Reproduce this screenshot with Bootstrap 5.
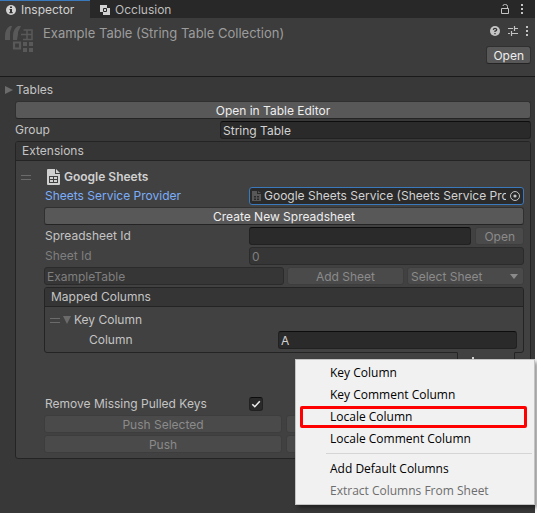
<!DOCTYPE html>
<html lang="en">
<head>
<meta charset="utf-8">
<meta name="viewport" content="width=device-width, initial-scale=1">
<title>Inspector</title>
<link href="https://cdn.jsdelivr.net/npm/bootstrap@5.3.0/dist/css/bootstrap.min.css" rel="stylesheet">
<style>
body{background:#fff;font-family:Inter,"Liberation Sans",sans-serif;font-size:12px;line-height:16px;color:#c4c4c4}
svg{display:block;flex:none}
.editor{background:#383838;min-height:100vh;margin-right:2px}
.tabs{background:#282828;height:18px}
.tab-item{height:18px;padding:1px 6px 0;gap:5px;color:#bdbdbd;font-size:12px;line-height:16px;border:0;background:none}
.tab-item.on{background:#3c3c3c;border-top:1px solid #3a79bb;width:90px;padding-top:0;color:#d2d2d2}
.tab-tools{gap:12px}
.asset-head{background:#3c3c3c;height:59px;border-bottom:1px solid #1a1a1a;padding:6px 4px 0 4px}
.asset-name{color:#9c9c9c;margin-left:9px;font-size:13px;line-height:18px}
.asset-tools{gap:8px;padding-right:3px}
.ibtn{border:0;background:none;padding:0;color:#c4c4c4}
.ebtn{height:18px;border:1px solid #303030;border-bottom-color:#242424;border-radius:3px;background:#585858;color:#eee;padding:0 6px;line-height:15px;font-size:12px;text-align:center}
.ebtn:disabled{background:#4a4a4a;border-color:#3d3d3d;color:#8b8b8b}
.field{height:18px;border:1px solid #212121;border-top-color:#0d0d0d;border-radius:3px;background:#2a2a2a;color:#d2d2d2;padding:0 2px;line-height:16px;font-size:12px;min-width:0;outline:0}
.field:disabled{background:#363636;border-color:#2b2b2b;color:#7f7f7f}
.line{height:18px;margin-bottom:2px}
.foldout{color:#c4c4c4;gap:3px;height:18px;margin-bottom:2px;padding:0 0 0 5px;border:0;background:none}
.group-body{padding:0 4px 0 15px}
.panel{border:1px solid #242424;border-radius:3px;background:#414141}
.panel-title{background:#353535;border-bottom:1px solid #242424;height:19px;padding:0 6px;line-height:18px;border-radius:2px 2px 0 0}
.ext-body{padding:6px 6px 5px 5px}
.sheet-head{height:20px;gap:4px;color:#d0d0d0}
.grip{width:10px;height:5px;border-top:1px solid #6b6b6b;border-bottom:1px solid #6b6b6b}
.sheet-body{padding-left:23px}
.lab{width:205px;flex:none;padding-left:1px}
.lab-group{width:205px;flex:none}
.lab-col{width:189px;flex:none}
.blue{color:#7baefa}
.dim{color:#7f7f7f}
.object-field{border:1px solid #3a79bb;gap:3px;padding:0 2px}
.sheet-line{gap:3px}
.sheet-tool{width:117px;flex:none}
.sel{appearance:none;height:18px;border:1px solid #3d3d3d;border-radius:3px;background:#4a4a4a;color:#8b8b8b;font-size:12px;line-height:15px;padding:0 3px;opacity:1;width:100%}
.arrow{right:6px;top:7px}
.list-body{padding:4px 6px 1px 5px}
.key-line{gap:3px}
.col-line{padding-left:39px}
.footer-tab{width:58px;height:19px;margin-right:9px;margin-top:-1px;border:1px solid #242424;border-top-color:#414141;background:#414141;border-radius:0 0 3px 3px;padding:0 10px}
.tick{appearance:none;width:14px;height:14px;margin:0;border:1px solid #212121;border-top-color:#0d0d0d;border-radius:3px;background:#2a2a2a}
.tick:checked{background:#2a2a2a url("data:image/svg+xml,%3Csvg xmlns='http://www.w3.org/2000/svg' viewBox='0 0 12 12'%3E%3Cpath d='M2.3 6.2 4.8 8.7 9.8 3.3' fill='none' stroke='%23eee' stroke-width='1.6'/%3E%3C/svg%3E") center/12px no-repeat}
.popup{left:295px;right:2px;top:359px;background:#f1f1f1;border:1px solid #c4c4c4;box-shadow:3px 3px 4px #0006;padding:2px;font-family:"Open Sans","Noto Sans",sans-serif;font-size:12px;z-index:5}
.entry{display:block;width:100%;height:22px;border:0;background:none;color:#000;text-align:left;padding:0 0 0 32px;line-height:20px}
.entry:disabled{color:#6d6d6d}
.entry.hot{border:3px solid #f00;border-radius:2px;margin-left:2px;width:calc(100% - 7px);padding-left:27px;line-height:14px}
.rule{height:1px;background:#d5d5d5;margin:3px 0 4px 28px}
</style>
<script src="https://cdn.jsdelivr.net/npm/bootstrap@5.3.0/dist/js/bootstrap.bundle.min.js"></script>
</head>
<body>
<main class="editor">
  <div class="tabs d-flex">
    <button class="tab-item on d-flex align-items-center">
      <svg width="10" height="10" viewBox="0 0 10 10"><circle cx="5" cy="5" r="5" fill="#d2d2d2"/><path d="M4 1.5h2v1.6H4zM3.5 4H6v3h.7v1.2H3.400V7H4V5h-.5z" fill="#333"/></svg>Inspector</button>
    <button class="tab-item d-flex align-items-center ms-1">
      <svg width="10" height="10" viewBox="0 0 10 10"><path d="M0 0h7v3h3v7H3V7H0z" fill="#d2d2d2"/><path d="M3.500 3.500h3v3h-3z" fill="#d2d2d2" stroke="#282828"/></svg>Occlusion</button>
    <div class="tab-tools d-flex ms-auto align-items-center pe-2 me-1">
      <button class="ibtn" aria-label="Lock"><svg width="8" height="10" viewBox="0 0 8 10" fill="none" stroke="#c4c4c4"><path d="M.5 4.500h7v5h-7zM6.500 4.500V2.500Q6.500.5 4.500.5H3.500Q2 .5 2 2"/></svg></button>
      <button class="ibtn" aria-label="Tab menu"><svg width="2" height="10" viewBox="0 0 2 10" fill="#c4c4c4"><path d="M0 0h2v2H0zM0 4h2v2H0zM0 8h2v2H0z"/></svg></button>
    </div>
  </div>
  <header class="asset-head d-flex">
    <svg width="30" height="30" viewBox="0 0 30 30" fill="#595959"><path d="M6 2h2L6 8v8H1v-4Q1 5 6 2zM14 2h3l-3 6v2l-1 6H9v-4Q9 5 14 2z"/><path d="M19.500 6h8.500v9.500h-9M17 10.500h11M23 6v9.500" fill="none" stroke="#595959" stroke-width="1.500"/><path d="M10 18.500h6v6h-6z" fill="none" stroke="#595959" stroke-width="2.200"/><path d="M19 18h4v4h-4zM25 18h4v4h-4zM19 24h4v4h-4zM25 24h4v4h-4z"/></svg>
    <div class="asset-name">Example Table (String Table Collection)</div>
    <div class="ms-auto d-flex flex-column align-items-end gap-2">
      <div class="asset-tools d-flex align-items-center">
        <button class="ibtn" aria-label="Help"><svg width="10" height="14" viewBox="0 -2 10 14"><circle cx="5" cy="5" r="5" fill="#c4c4c4"/><path d="M3.300 3.800Q3.500 2.300 5 2.300T6.700 3.700Q6.700 4.600 5 5.200V6M5 7v1.300" stroke="#333" stroke-width="1.300" fill="none"/></svg></button>
        <button class="ibtn" aria-label="Presets"><svg width="10" height="10" viewBox="0 0 10 10" stroke="#c4c4c4"><path d="M0 2.500h5M7 2.500h3M6.500 0v5M0 7.500h2M4 7.500h6M3.500 5v5" stroke-width="1.200"/></svg></button>
        <button class="ibtn" aria-label="Asset menu"><svg width="2" height="10" viewBox="0 0 2 10" fill="#c4c4c4"><path d="M0 0h2v2H0zM0 4h2v2H0zM0 8h2v2H0z"/></svg></button>
      </div>
      <button class="ebtn">Open</button>
    </div>
  </header>
  <div class="pt-1">
    <button class="foldout d-flex align-items-center"><svg width="8" height="8" viewBox="0 0 8 8"><path d="M0 0l8 4-8 4z" fill="#6b6b6b"/></svg>Tables</button>
    <div class="group-body">
      <div class="line d-flex"><button class="ebtn flex-fill">Open in Table Editor</button></div>
      <div class="line d-flex align-items-center"><label class="lab-group" for="grp">Group</label><input id="grp" class="field flex-fill" value="String Table"></div>
      <section class="panel">
        <div class="panel-title">Extensions</div>
        <div class="ext-body">
          <div class="sheet-head d-flex align-items-center"><span class="grip me-2"></span>
            <svg class="ms-1" width="13" height="16" viewBox="0 0 13 16"><path d="M1 0h7v5h5v10q0 1-1 1H1q-1 0-1-1V1q0-1 1-1z" fill="#d0d0d0"/><path d="M9 0l4 4H9z" fill="#d0d0d0"/><path d="M2 7h9v7H2z" fill="#414141"/><path d="M3 8h3v2H3zM7 8h3v2H7zM3 11h3v2H3zM7 11h3v2H7z" fill="#d0d0d0"/></svg>
            <b class="fw-semibold">Google Sheets</b></div>
          <div class="sheet-body">
            <div class="line d-flex align-items-center"><span class="lab blue">Sheets Service Provider</span>
              <div class="field object-field d-flex flex-fill align-items-center">
                <svg width="9" height="10" viewBox="0 0 9 10"><path d="M0 0h5v3h4v7H0zM6 0l3 2H6z" fill="#585858"/><path d="M2 5h2v1.500H2zM5 5h2v1.500H5zM2 7.500h2V9H2zM5 7.500h2V9H5z" fill="#2a2a2a"/></svg>
                <span class="flex-fill overflow-hidden text-nowrap">Google Sheets Service (Sheets Service Provider)</span>
                <button class="ibtn" aria-label="Pick object"><svg width="12" height="12" viewBox="0 0 12 12"><circle cx="6" cy="6" r="4.500" fill="none" stroke="#c4c4c4"/><circle cx="6" cy="6" r="1.600" fill="#c4c4c4"/></svg></button>
              </div></div>
            <div class="line d-flex"><button class="ebtn flex-fill">Create New Spreadsheet</button></div>
            <div class="line d-flex align-items-center"><label class="lab" for="ssid">Spreadsheet Id</label><input id="ssid" class="field flex-fill me-1"><button class="ebtn px-2" disabled>Open</button></div>
            <div class="line d-flex align-items-center"><label class="lab dim" for="sid">Sheet Id</label><input id="sid" class="field flex-fill" value="0" disabled></div>
            <div class="line sheet-line d-flex"><input class="field flex-fill" aria-label="Sheet name" value="ExampleTable" disabled><button class="ebtn sheet-tool" disabled>Add Sheet</button>
              <div class="sheet-tool position-relative"><select class="sel" aria-label="Select sheet" disabled><option>Select Sheet</option></select><svg class="arrow position-absolute" width="8" height="5" viewBox="0 0 8 5"><path d="M0 0h8L4 5z" fill="#8b8b8b"/></svg></div></div>
            <section class="panel">
              <div class="panel-title">Mapped Columns</div>
              <div class="list-body">
                <div class="line key-line d-flex align-items-center"><span class="grip"></span><button class="ibtn key-line d-flex align-items-center"><svg width="8" height="8" viewBox="0 0 8 8"><path d="M0 0h8L4 8z" fill="#6b6b6b"/></svg>Key Column</button></div>
                <div class="line col-line d-flex align-items-center"><label class="lab-col" for="col">Column</label><input id="col" class="field flex-fill" value="A"></div>
              </div>
            </section>
            <div class="d-flex justify-content-end"><button class="footer-tab" aria-label="Add column"><svg width="10" height="10" viewBox="0 0 10 10"><path d="M4 0h2v4h4v2H6v4H4V6H0V4h4z" fill="#d2d2d2"/></svg></button></div>
            <div class="line d-flex align-items-center mt-4"><label class="lab" for="rm">Remove Missing Pulled Keys</label><input id="rm" class="tick" type="checkbox" checked></div>
            <div class="line d-flex gap-1"><button class="ebtn w-50" disabled>Push Selected</button><button class="ebtn w-50" aria-label="Pull Selected" disabled></button></div>
            <div class="line d-flex gap-1 mb-0"><button class="ebtn w-50" disabled>Push</button><button class="ebtn w-50" aria-label="Pull" disabled></button></div>
          </div>
        </div>
      </section>
    </div>
  </div>
</main>
<div class="popup position-absolute">
  <button class="entry">Key Column</button>
  <button class="entry">Key Comment Column</button>
  <button class="entry hot">Locale Column</button>
  <button class="entry">Locale Comment Column</button>
  <div class="rule"></div>
  <button class="entry">Add Default Columns</button>
  <button class="entry" disabled>Extract Columns From Sheet</button>
</div>
</body>
</html>
